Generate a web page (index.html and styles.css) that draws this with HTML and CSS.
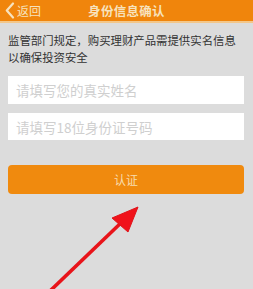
FILE: index.html
```html
<!DOCTYPE html>
<html lang="zh-CN">
<head>
    <meta charset="UTF-8">
    <meta name="viewport" content="width=device-width, initial-scale=1.0">
    <title>身份信息确认</title>
    <link rel="stylesheet" href="styles.css">
</head>
<body>
    <div class="page">
        <div class="topbar">
            <div class="back">
                <svg class="chevron" width="11" height="17" viewBox="0 0 11 17">
                    <path d="M9 1.5 L2.8 8.5 L9 15.5" fill="none" stroke="#f7e2bd" stroke-width="2.2" stroke-linecap="round" stroke-linejoin="round"/>
                </svg>
                <span>返回</span>
            </div>
            <div class="title">身份信息确认</div>
            <div></div>
        </div>

        <p class="notice">监管部门规定，购买理财产品需提供实名信息以确保投资安全</p>

        <div class="form">
            <input class="field" type="text" placeholder="请填写您的真实姓名">
            <input class="field second" type="text" placeholder="请填写18位身份证号码">
            <button class="submit">认证</button>
        </div>

        <!-- red annotation arrow pointing at the button -->
        <svg class="pointer" width="253" height="289" viewBox="0 0 253 289">
            <line x1="50" y1="291" x2="124" y2="220" stroke="#e8141a" stroke-width="3.6"/>
            <polygon points="138,207 128,232 112,218" fill="#f0121a" stroke="#e0141a" stroke-width="1" stroke-linejoin="round"/>
        </svg>
    </div>
</body>
</html>
```

FILE: styles.css
```css
body { margin: 0; background: #dcdcdc; font-family: "Noto Sans CJK SC", "Noto Sans", sans-serif; }
.page { position: relative; width: 253px; height: 289px; overflow: hidden; }
.topbar { display: grid; grid-template-columns: 1fr auto 1fr; align-items: center; height: 21px; background: #f0850c; border-bottom: 2px solid #f3c78a; color: #f7e2bd; }
.back { display: flex; align-items: center; gap: 2px; padding-left: 4px; font-size: 12px; }
.chevron { display: block; }
.title { font-size: 12.5px; font-weight: bold; letter-spacing: 0.3px; }
.notice { margin: 9px 8px 0; font-size: 11.4px; line-height: 17px; color: #333; }
.form { display: flex; flex-direction: column; padding: 0 9px 0 8px; margin-top: 10px; }
.field { box-sizing: border-box; height: 28px; border: none; background: #fff; padding: 0 8px; font-family: inherit; font-size: 13.5px; outline: none; }
.field::placeholder { color: #cfcfcf; }
.second { margin-top: 9px; height: 27px; }
.submit { margin-top: 25px; height: 29px; border: none; border-radius: 4px; background: #f08a0e; color: #f8dcae; font-family: inherit; font-size: 12px; padding: 0; }
.pointer { position: absolute; left: 0; top: 0; }
```
